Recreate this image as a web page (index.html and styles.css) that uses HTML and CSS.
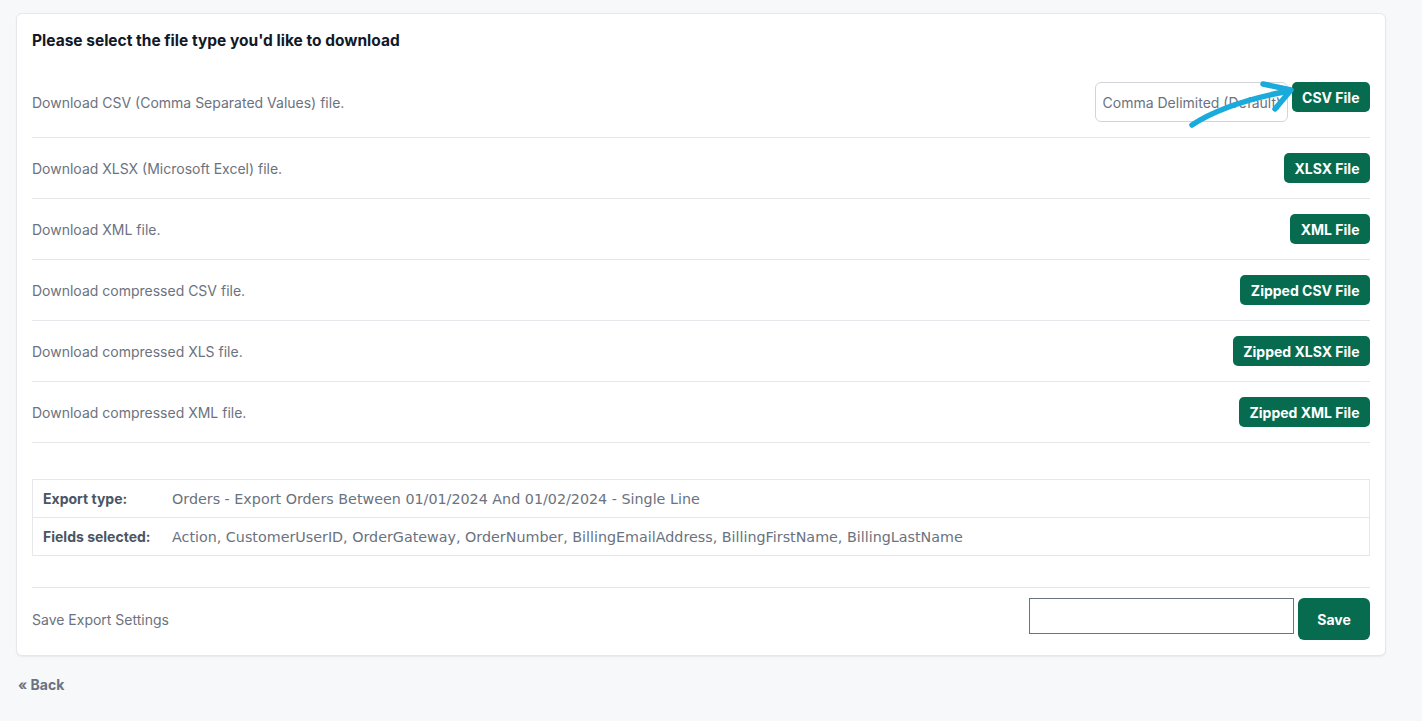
FILE: index.html
```html
<!DOCTYPE html>
<html lang="en">
  <head>
    <meta charset="UTF-8" />
    <title>Export Download</title>
    <link rel="stylesheet" href="styles.css">
  </head>
  <body>
    <div class="card">
      <h3 class="card-title">Please select the file type you'd like to download</h3>

      <div class="dl-row">
        <span>Download CSV (Comma Separated Values) file.</span>
        <div class="csv-actions">
          <select class="delim">
            <option>Comma Delimited (Default)</option>
          </select>
          <button class="btn">CSV File</button>
          <svg class="arrow" width="110" height="50" viewBox="0 0 110 50">
            <path d="M7 46 Q 40 24 104 12" />
            <path d="M78 5 L106 11 L90 30" />
          </svg>
        </div>
      </div>

      <div class="dl-row">
        <span>Download XLSX (Microsoft Excel) file.</span>
        <button class="btn">XLSX File</button>
      </div>

      <div class="dl-row">
        <span>Download XML file.</span>
        <button class="btn">XML File</button>
      </div>

      <div class="dl-row">
        <span>Download compressed CSV file.</span>
        <button class="btn">Zipped CSV File</button>
      </div>

      <div class="dl-row">
        <span>Download compressed XLS file.</span>
        <button class="btn">Zipped XLSX File</button>
      </div>

      <div class="dl-row">
        <span>Download compressed XML file.</span>
        <button class="btn">Zipped XML File</button>
      </div>

      <table class="summary">
        <tr>
          <th>Export type:</th>
          <td>Orders - Export Orders Between 01/01/2024 And 01/02/2024 - Single Line</td>
        </tr>
        <tr>
          <th>Fields selected:</th>
          <td>Action, CustomerUserID, OrderGateway, OrderNumber, BillingEmailAddress, BillingFirstName, BillingLastName</td>
        </tr>
      </table>

      <div class="save-row">
        <span>Save Export Settings</span>
        <div class="save-form">
          <input type="text" class="save-name" />
          <button class="btn btn-save">Save</button>
        </div>
      </div>
    </div>

    <a href="#" class="back">&laquo; Back</a>
  </body>
</html>
```

FILE: styles.css
```css
:root {
  --green: #066b4f;
  --line: #e5e7eb;
  --muted: #6b7280;
}

body {
  margin: 0;
  padding: 13px 36px 0 16px;
  font-family: Inter, "Liberation Sans", sans-serif;
  background-color: #f7f8fa;
  color: #111827;
}

.card {
  background: white;
  border: 1px solid var(--line);
  border-radius: 6px;
  box-shadow: 0 1px 2px rgba(0, 0, 0, 0.06);
  padding: 17px 15px 15px 15px;
}

.card-title {
  margin: 0 0 16px;
  font-size: 15.5px;
  font-weight: 700;
  line-height: 20px;
}

.dl-row {
  display: flex;
  justify-content: space-between;
  align-items: center;
  padding: 15px 0;
  border-bottom: 1px solid var(--line);
  font-size: 14px;
  color: var(--muted);
}

.csv-actions {
  position: relative;
  display: flex;
  align-items: flex-start;
  gap: 4px;
}

.delim {
  width: 193px;
  height: 40px;
  border: 1px solid #d1d5db;
  border-radius: 6px;
  background: white;
  padding: 0 7px;
  font-family: Inter, sans-serif;
  font-size: 14px;
  color: var(--muted);
  appearance: none;
}

.arrow {
  position: absolute;
  left: 90px;
  top: -3px;
  overflow: visible;
}

.arrow path {
  fill: none;
  stroke: #1aaadc;
  stroke-width: 5.5;
  stroke-linecap: round;
  stroke-linejoin: round;
}

.btn {
  background-color: var(--green);
  color: white;
  border: none;
  border-radius: 5px;
  height: 30px;
  padding: 0 10.5px;
  font-family: Inter, sans-serif;
  font-size: 14px;
  font-weight: 700;
  cursor: pointer;
}

.summary {
  width: 100%;
  margin-top: 36px;
  border-collapse: collapse;
  border: 1px solid var(--line);
  table-layout: fixed;
  font-family: "DejaVu Sans", Verdana, sans-serif;
  font-size: 14.3px;
  color: var(--muted);
}

.summary th,
.summary td {
  text-align: left;
  padding: 0 10px;
  height: 37px;
  border-bottom: 1px solid var(--line);
  white-space: nowrap;
}

.summary th {
  width: 109px;
  font-family: Inter, sans-serif;
  font-weight: 700;
  font-size: 14px;
  color: #4b5563;
}

.save-row {
  display: flex;
  justify-content: space-between;
  align-items: center;
  margin-top: 31px;
  padding-top: 10px;
  border-top: 1px solid var(--line);
  font-size: 14px;
  color: var(--muted);
}

.save-form {
  display: flex;
  align-items: flex-start;
  gap: 4px;
  height: 42px;
}

.save-name {
  box-sizing: border-box;
  width: 265px;
  height: 36px;
  border: 1px solid var(--muted);
  margin: 0;
}

.btn-save {
  height: 42px;
  width: 72px;
  border-radius: 6px;
}

.back {
  display: inline-block;
  margin: 20px 0 0 2px;
  color: var(--muted);
  font-weight: 700;
  font-size: 14px;
  text-decoration: none;
}
```
